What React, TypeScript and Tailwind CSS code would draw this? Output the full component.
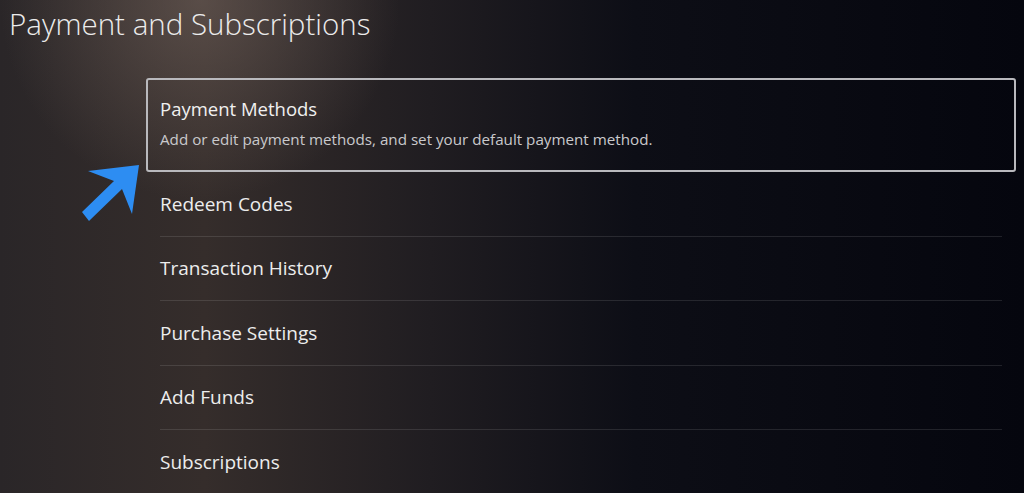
import React from 'react';

const items = ['Redeem Codes', 'Transaction History', 'Purchase Settings', 'Add Funds', 'Subscriptions'];

function Arrow() {
  return (
    <svg className="absolute left-[78px] top-[160px]" width="64" height="64" viewBox="0 0 64 64">
      <polygon points="10,11 61,5 54,54 44,29 11,61 4,52 36,21" fill="#2d8df2" />
    </svg>
  );
}

export default function App() {
  return (
    <div
      className="relative w-[1024px] h-[493px] overflow-hidden text-white bg-[#07080f] bg-[radial-gradient(ellipse_200px_200px_at_200px_0px,rgba(125,108,100,0.5),transparent),linear-gradient(90deg,#2a2628_0%,#352d2b_20%,#201d21_42%,#0d0e16_62%,#05060e_100%)]"
      style={{ fontFamily: '"Open Sans", "Noto Sans", sans-serif' }}
    >
      <div className="pl-[9px] pt-[4px] h-[78px]">
        <h1 className="text-[29.5px] font-light leading-[40px] text-[#ececec]">Payment and Subscriptions</h1>
      </div>

      <div className="ml-[146px] w-[870px]">
        <div className="h-[94px] border-2 border-[#b9b9bd] rounded-[3px] px-[12px] pt-[17px]">
          <div className="text-[18.5px] leading-[24px] text-[#f0f0f0]">Payment Methods</div>
          <div className="mt-[8px] text-[15.2px] leading-[20px] text-[#c9c9cc]">
            Add or edit payment methods, and set your default payment method.
          </div>
        </div>

        <div className="px-[14px]">
          {items.map((label, i) => (
            <div
              key={label}
              className={`h-[64.6px] flex items-center text-[19px] text-[#ededed] ${i < items.length - 1 ? 'border-b border-[#ffffff1c]' : ''}`}
            >
              {label}
            </div>
          ))}
        </div>
      </div>

      <Arrow />
    </div>
  );
}
